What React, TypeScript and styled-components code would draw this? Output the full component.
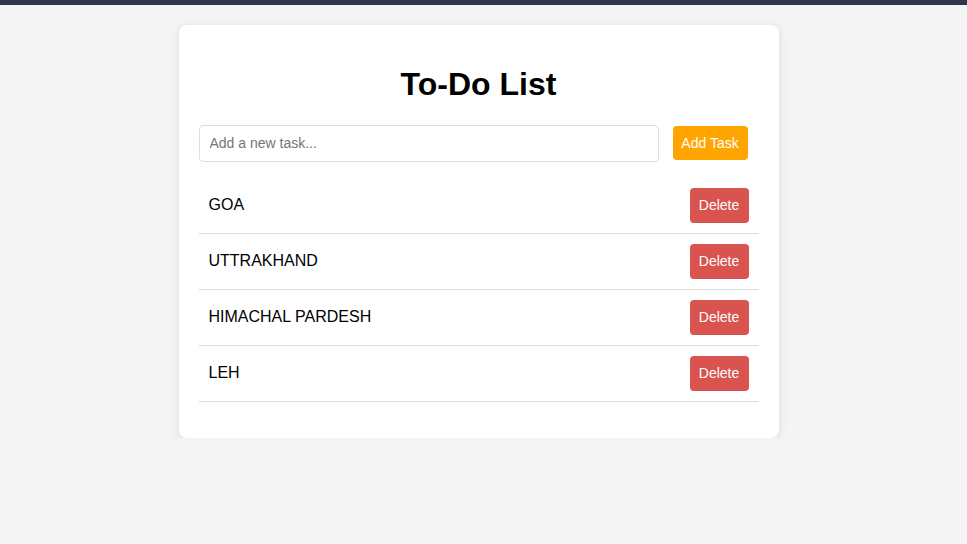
import React, { useState } from "react";
import styled, { createGlobalStyle } from "styled-components";

const GlobalStyle = createGlobalStyle`
  html, body {
    margin: 0;
    padding: 0;
    background: #f4f4f4;
    font-family: "Liberation Sans", Arial, sans-serif;
  }
`;

const TopBar = styled.div`
  height: 5px;
  background: #2d3748;
`;

// page area leaves room on the right, like the original's scrollbar gutter
const Page = styled.main`
  padding: 20px 10px 0 0;
`;

const Card = styled.div`
  width: 600px;
  box-sizing: border-box;
  margin: 0 auto;
  padding: 20px;
  background: #fff;
  border-radius: 8px;
  box-shadow: 0 2px 10px rgba(0, 0, 0, 0.1);
`;

const Title = styled.h1`
  margin: 21.44px 0;
  font-size: 32px;
  font-weight: bold;
  text-align: center;
  color: #000;
`;

const InputRow = styled.div`
  display: flex;
  align-items: center;
  gap: 14px;
`;

const TaskInput = styled.input`
  width: 460px;
  height: 37px;
  box-sizing: border-box;
  padding: 0 10px;
  border: 1px solid #ddd;
  border-radius: 4px;
  font-family: inherit;
  font-size: 14px;
  outline: none;

  &::placeholder {
    color: #757575;
  }
`;

const Button = styled.button<{ $bg: string; $w: number; $h: number }>`
  width: ${p => p.$w}px;
  height: ${p => p.$h}px;
  padding: 0;
  border: none;
  border-radius: 4px;
  background: ${p => p.$bg};
  color: #fff;
  font-family: inherit;
  font-size: 14px;
  cursor: pointer;
`;

const List = styled.ul`
  margin: 16px 0;
  padding: 0;
  list-style: none;
`;

const Item = styled.li`
  display: flex;
  align-items: center;
  justify-content: space-between;
  padding: 10px;
  border-bottom: 1px solid #ddd;
  font-size: 16px;
  color: #000;
`;

export default function App() {
  const [tasks, setTasks] = useState(["GOA", "UTTRAKHAND", "HIMACHAL PARDESH", "LEH"]);
  const [text, setText] = useState("");

  const add = () => {
    if (!text.trim()) return;
    setTasks([...tasks, text.trim()]);
    setText("");
  };

  return (
    <>
      <GlobalStyle />
      <TopBar />
      <Page>
        <Card>
          <Title>To-Do List</Title>
          <InputRow>
            <TaskInput
              placeholder="Add a new task..."
              value={text}
              onChange={e => setText(e.target.value)}
            />
            <Button $bg="#ffa500" $w={75} $h={34} onClick={add}>
              Add Task
            </Button>
          </InputRow>
          <List>
            {tasks.map((t, i) => (
              <Item key={i}>
                <span>{t}</span>
                <Button
                  $bg="#d9534f"
                  $w={59}
                  $h={35}
                  onClick={() => setTasks(tasks.filter((_, j) => j !== i))}
                >
                  Delete
                </Button>
              </Item>
            ))}
          </List>
        </Card>
      </Page>
    </>
  );
}
